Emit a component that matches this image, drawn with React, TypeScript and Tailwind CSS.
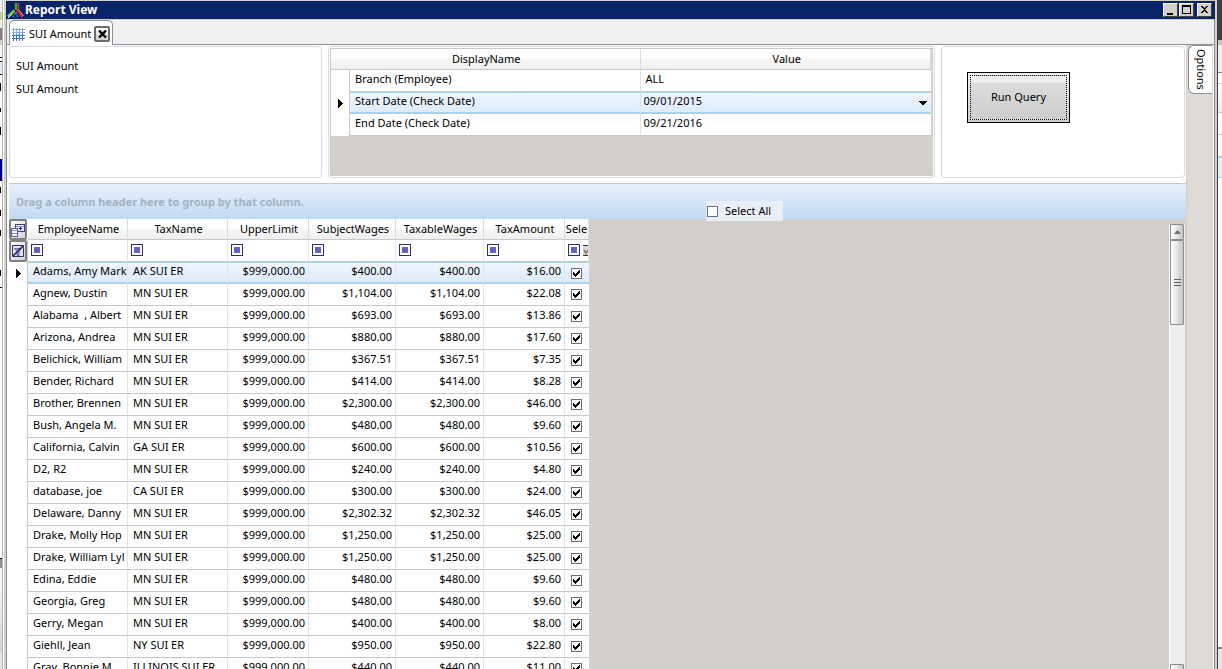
import React from "react";

type Row = [string, string, string, string, string];

const rows: Row[] = [
  ["Adams, Amy Mark", "AK SUI ER", "$400.00", "$400.00", "$16.00"],
  ["Agnew, Dustin", "MN SUI ER", "$1,104.00", "$1,104.00", "$22.08"],
  ["Alabama  , Albert", "MN SUI ER", "$693.00", "$693.00", "$13.86"],
  ["Arizona, Andrea", "MN SUI ER", "$880.00", "$880.00", "$17.60"],
  ["Belichick, William", "MN SUI ER", "$367.51", "$367.51", "$7.35"],
  ["Bender, Richard", "MN SUI ER", "$414.00", "$414.00", "$8.28"],
  ["Brother, Brennen", "MN SUI ER", "$2,300.00", "$2,300.00", "$46.00"],
  ["Bush, Angela M.", "MN SUI ER", "$480.00", "$480.00", "$9.60"],
  ["California, Calvin", "GA SUI ER", "$600.00", "$600.00", "$10.56"],
  ["D2, R2", "MN SUI ER", "$240.00", "$240.00", "$4.80"],
  ["database, joe", "CA SUI ER", "$300.00", "$300.00", "$24.00"],
  ["Delaware, Danny", "MN SUI ER", "$2,302.32", "$2,302.32", "$46.05"],
  ["Drake, Molly Hop", "MN SUI ER", "$1,250.00", "$1,250.00", "$25.00"],
  ["Drake, William Lyl", "MN SUI ER", "$1,250.00", "$1,250.00", "$25.00"],
  ["Edina, Eddie", "MN SUI ER", "$480.00", "$480.00", "$9.60"],
  ["Georgia, Greg", "MN SUI ER", "$480.00", "$480.00", "$9.60"],
  ["Gerry, Megan", "MN SUI ER", "$400.00", "$400.00", "$8.00"],
  ["Giehll, Jean", "NY SUI ER", "$950.00", "$950.00", "$22.80"],
  ["Gray, Bonnie M", "ILLINOIS SUI ER", "$440.00", "$440.00", "$11.00"],
];

const columns = ["EmployeeName", "TaxName", "UpperLimit", "SubjectWages", "TaxableWages", "TaxAmount", "Sele"];

const headCell =
  "h-[21px] overflow-hidden whitespace-nowrap border-b border-r border-b-[#c8c8c8] border-r-[#dcdcdc] bg-linear-to-b from-white from-45% via-[#f7f7f7] via-50% to-[#efefef] p-0 text-center font-normal";

function Check({ label }: { label: string }) {
  return (
    <span className="grid size-[11px]">
      <input
        type="checkbox"
        defaultChecked
        aria-label={label}
        className="peer size-[11px] appearance-none border border-[#707070] bg-white [grid-area:1/1]"
      />
      <svg viewBox="0 0 11 11" shapeRendering="crispEdges" className="pointer-events-none hidden size-[11px] [grid-area:1/1] peer-checked:block">
        <path d="M2 4h1v1h1v1h1v-1h1v-1h1v-1h1v-1h1v3h-1v1h-1v1h-1v1h-1v1h-1v-1h-1v-1h-1z" fill="#000" />
      </svg>
    </span>
  );
}

function Pointer() {
  return (
    <svg viewBox="0 0 5 9" className="ml-[7px] block h-[9px] w-[5px]" shapeRendering="crispEdges">
      <path d="M0 0h1v1h1v1h1v1h1v1h1v1h-1v1h-1v1h-1v1h-1v1h-1z" fill="#000" />
    </svg>
  );
}

function FilterButton({ name }: { name: string }) {
  return (
    <button aria-label={`Filter ${name}`} className="grid size-[12px] shrink-0 place-items-center border border-[#30306a] bg-white">
      <span className="size-[6px] bg-[#6464cc]" />
    </button>
  );
}

function CaptionButton({ label, children }: { label: string; children: React.ReactNode }) {
  return (
    <button
      aria-label={label}
      className="h-[14px] w-[15px] border border-b-[#404040] border-l-white border-r-[#404040] border-t-white bg-[#d4d0c8]"
    >
      <svg viewBox="0 0 13 12" className="block h-[12px] w-[13px]" shapeRendering="crispEdges">
        {children}
      </svg>
    </button>
  );
}

function TitleBar() {
  return (
    <header className="flex h-[18px] shrink-0 items-center bg-[#0a246a] pl-px pr-[3px] text-white">
      <svg viewBox="0 0 17 16" className="h-[16px] w-[17px]">
        <path d="M4 1l5 8" stroke="#111" strokeWidth="1.4" />
        <path d="M1 14.500L7.500 8.500" stroke="#8cc63f" strokeWidth="2.6" />
        <path d="M1 16L5 12" stroke="#e8f5c0" strokeWidth="1" />
        <path d="M9.500 7L15.500 15" stroke="#e02020" strokeWidth="2.4" />
        <path d="M11.500 7.500L16.500 14" stroke="#f8d0d0" strokeWidth=".8" />
        <path d="M9 1v7" stroke="#3fa535" strokeWidth="2.4" />
        <path d="M11.500 1v6" stroke="#e03030" strokeWidth="1.4" />
        <path d="M6 15l3-5 2 6" stroke="#4a78c8" strokeWidth="1.4" fill="none" strokeDasharray="2 1" />
      </svg>
      <h1 className="ml-px flex-1 text-[12px] font-bold leading-[16px]">Report View</h1>
      <div className="flex">
        <CaptionButton label="Minimize">
          <path d="M3 9h6v2h-6z" fill="#000" />
        </CaptionButton>
        <span className="w-px" />
        <CaptionButton label="Maximize">
          <path d="M2 1h9v9h-9zM3 3v6h7v-6z" fill="#000" fillRule="evenodd" />
        </CaptionButton>
        <span className="w-[3px]" />
        <CaptionButton label="Close">
          <path d="M3 2h2v1h1v1h1v-1h1v-1h2v1h-1v1h-1v1h-1v1h1v1h1v1h1v1h-2v-1h-1v-1h-1v1h-1v1h-2v-1h1v-1h1v-1h1v-1h-1v-1h-1v-1h-1z" fill="#000" />
        </CaptionButton>
      </div>
    </header>
  );
}

function TabStrip() {
  return (
    <nav className="flex h-[26px] shrink-0 items-end border-b border-t border-b-[#8c8f98] border-t-[#d4d0c8] bg-[#f0f0f0] pl-[2px]">
      <div className="-mb-px flex h-[25px] items-center rounded-t-[5px] border border-b-0 border-[#8c8f98] bg-white pl-px pr-[2px] pt-[2px]">
        <svg viewBox="0 0 14 14" className="size-[14px]" shapeRendering="crispEdges">
          <path d="M2 0v14M5 0v14M8 0v14M11 0v14M0 2h14M0 5h14M0 8h14M0 11h14" transform="translate(.5 .5)" stroke="#3f78c0" strokeWidth="1" />
          <path d="M2 0v6M5 0v6M8 0v6M11 0v6M0 2h14M0 5h14" transform="translate(.5 .5)" stroke="#7fb0e4" strokeWidth="1" />
        </svg>
        <button className="ml-[4px] whitespace-nowrap leading-[16px]">SUI Amount</button>
        <button
          aria-label="Close tab"
          className="ml-[3px] grid size-[16px] place-items-center rounded-[2px] border-2 border-[#6c6c6c] bg-linear-to-b from-white to-[#cfcfcf]"
        >
          <svg viewBox="0 0 9 8" className="h-[8px] w-[9px]">
            <path d="M1 .5L8 7.5M8 .5L1 7.5" stroke="#000" strokeWidth="2.4" />
          </svg>
        </button>
      </div>
    </nav>
  );
}

function Parameters() {
  const line = "h-[22px] border-b border-b-[#c8c8c8] p-0";
  return (
    <section className="rounded-[4px] border border-[#d8dae0] bg-white p-px">
      <div className="h-full border-l border-t border-[#c8c8c8] bg-[#d3d0cb] pr-[2px]">
        <table className="w-full table-fixed border-separate border-spacing-0">
          <colgroup>
            <col className="w-[19px]" />
            <col />
            <col />
          </colgroup>
          <thead>
            <tr>
              <th colSpan={2} className={`${headCell} pl-[2px]`}>DisplayName</th>
              <th className={`${headCell} pl-[3px]`}>Value</th>
            </tr>
          </thead>
          <tbody>
            <tr>
              <td className="h-[22px] border-r border-r-[#c8c8c8] bg-white p-0" />
              <td className={`${line} border-r border-r-[#e4e4e4] bg-white pb-[4px] pl-[5px]`}>Branch (Employee)</td>
              <td className={`${line} bg-white pb-[4px] pl-[5px]`}>ALL</td>
            </tr>
            <tr>
              <td className="h-[22px] border-r border-r-[#c8c8c8] bg-white p-0">
                <Pointer />
              </td>
              <td className={`${line} border-r border-t border-r-[#e4e4e4] border-t-[#98d8fa] bg-linear-to-b from-[#f0f6fd] to-[#dcebfc] pb-[4px] pl-[5px] shadow-[inset_0_-1px_0_#98d8fa]`}>
                Start Date (Check Date)
              </td>
              <td className={`${line} border-t border-t-[#98d8fa] bg-linear-to-b from-[#f0f6fd] to-[#dcebfc] pb-[4px] pl-[3px] shadow-[inset_0_-1px_0_#98d8fa]`}>
                <div className="flex items-center pr-[4px]">
                  <select aria-label="Start Date (Check Date)" className="h-[16px] flex-1 appearance-none bg-transparent leading-[16px]">
                    <option>09/01/2015</option>
                  </select>
                  <svg viewBox="0 0 8 4" className="mt-[4px] h-[4px] w-[8px]" shapeRendering="crispEdges">
                    <path d="M0 0h8v1h-1v1h-1v1h-1v1h-2v-1h-1v-1h-1v-1h-1z" fill="#000" />
                  </svg>
                </div>
              </td>
            </tr>
            <tr>
              <td className="h-[22px] border-r border-r-[#c8c8c8] bg-white p-0" />
              <td className={`${line} border-r border-r-[#e4e4e4] bg-white pb-[4px] pl-[5px]`}>End Date (Check Date)</td>
              <td className={`${line} bg-white pb-[4px] pl-[3px]`}>09/21/2016</td>
            </tr>
          </tbody>
        </table>
      </div>
    </section>
  );
}

function DataGrid() {
  const cell =
    "h-[22px] overflow-hidden whitespace-pre border-b border-r border-b-[#c8c8c8] border-r-[#e4e4e4] p-0 pb-[4px]";
  const active = "border-t border-t-[#98d8fa] bg-linear-to-b from-[#f0f6fd] to-[#dcebfc] shadow-[inset_0_-1px_0_#98d8fa]";
  const tool = "grid w-[18px] place-items-center rounded-[2px] border-2 border-[#808080] bg-linear-to-br from-white to-[#d0d0d0]";
  return (
    <table className="w-[580px] table-fixed border-separate border-spacing-0 self-start bg-white">
      <colgroup>
        <col className="w-[19px]" />
        <col className="w-[100px]" />
        <col className="w-[100px]" />
        <col className="w-[81px]" />
        <col className="w-[87px]" />
        <col className="w-[88px]" />
        <col className="w-[81px]" />
        <col className="w-[24px]" />
      </colgroup>
      <thead>
        <tr>
          <td className="h-[21px] p-0">
            <button aria-label="Choose columns" className={`${tool} h-[21px]`}>
              <svg viewBox="0 0 14 14" className="size-[14px]" shapeRendering="crispEdges">
                <path d="M4.500 1.500h9v7h-9z" fill="#e4e8fa" stroke="#40407c" />
                <path d="M5 3.500h8" stroke="#8c92d0" />
                <path d="M.5 5.500h6v8h-6z" fill="#f4f6ff" stroke="#5c5c98" />
                <path d="M1 7.500h5M1 10.500h5" stroke="#8c92d0" />
                <path d="M8 5.500h3M9.500 4v3" stroke="#20205a" />
              </svg>
            </button>
          </td>
          {columns.map((c, i) => (
            <th key={c} className={`${headCell} ${i < 6 ? "pl-[2px]" : ""}`}>{c}</th>
          ))}
        </tr>
        <tr>
          <td className="h-[22px] border-r border-r-[#c8c8c8] p-0">
            <button aria-label="Clear filters" className={`${tool} h-[22px]`}>
              <svg viewBox="0 0 12 12" className="size-[12px]">
                <path d="M.5.500h11v11H.5z" fill="#dfe3fa" stroke="#30306a" />
                <path d="M2.500 3.500h7L7 6.500v4H5v-4z" fill="#9aa0e0" stroke="#5050a0" strokeWidth=".8" />
                <path d="M1 11L11 1" stroke="#1c1c4c" strokeWidth="1.400" />
              </svg>
            </button>
          </td>
          {columns.map((c, i) => (
            <td key={c} className="h-[22px] overflow-hidden border-b border-r border-b-[#c8c8c8] border-r-[#e4e4e4] p-0">
              <div className="flex items-center gap-[3px] overflow-hidden pb-px pl-[3px]">
                <FilterButton name={c} />
                {i < 6 ? (
                  <input aria-label={`${c} filter value`} className="h-[12px] w-0 min-w-0 flex-1 bg-transparent" />
                ) : (
                  <svg viewBox="0 0 6 11" className="h-[11px] w-[6px] shrink-0">
                    <path d="M0 1h6v9H0z" fill="#dcdcdc" />
                    <path d="M0 .5h6M0 10.500h6" stroke="#303030" />
                    <path d="M1 5l2 3 4-5" fill="none" stroke="#808080" strokeWidth="2" />
                  </svg>
                )}
              </div>
            </td>
          ))}
        </tr>
      </thead>
      <tbody>
        {rows.map((r, i) => {
          const tone = i === 0 ? active : "";
          return (
            <tr key={r[0]}>
              <td className="h-[22px] border-r border-r-[#c8c8c8] p-0">{i === 0 && <Pointer />}</td>
              <td className={`${cell} ${tone} pl-[5px]`}>{r[0]}</td>
              <td className={`${cell} ${tone} pl-[5px]`}>{r[1]}</td>
              <td className={`${cell} ${tone} pr-[3px] text-right`}>$999,000.00</td>
              <td className={`${cell} ${tone} pr-[3px] text-right`}>{r[2]}</td>
              <td className={`${cell} ${tone} pr-[3px] text-right`}>{r[3]}</td>
              <td className={`${cell} ${tone} pr-[3px] text-right`}>{r[4]}</td>
              <td className={`h-[22px] border-b border-b-[#c8c8c8] p-0 pl-[6px] ${tone}`}>
                <Check label={`Select ${r[0]}`} />
              </td>
            </tr>
          );
        })}
      </tbody>
    </table>
  );
}

function ScrollBar() {
  const face = "grid shrink-0 place-items-center rounded-[1px] border border-[#8c8c8c] bg-linear-to-r from-white via-[#e4e4e4] to-[#c4c4c8]";
  return (
    <div className="mr-px mt-[5px] flex w-[16px] flex-col border-l border-l-white bg-[#eeeeee]">
      <button aria-label="Scroll up" className={`${face} h-[16px] w-[14px]`}>
        <svg viewBox="0 0 7 4" className="h-[4px] w-[7px]">
          <path d="M3.500 0L7 4H0z" fill="#707070" />
        </svg>
      </button>
      <div className={`${face} h-[85px] w-[14px]`}>
        <svg viewBox="0 0 7 8" className="h-[8px] w-[7px]" shapeRendering="crispEdges">
          <path d="M0 .5h7M0 3.500h7M0 6.500h7" stroke="#606060" />
        </svg>
      </div>
      <div className="flex-1" />
      <button aria-label="Scroll down" className={`${face} -mb-[11px] h-[16px] w-[14px]`}>
        <svg viewBox="0 0 7 4" className="h-[4px] w-[7px]">
          <path d="M0 0h7L3.500 4z" fill="#707070" />
        </svg>
      </button>
    </div>
  );
}

function LeftEdge() {
  return (
    <div className="flex w-[2px] shrink-0 flex-col bg-white">
      <div className="h-[12px] bg-[#f0f0f0]" />
      <div className="h-[8px] bg-[#b8d890]" />
      <div className="h-[8px] bg-[#f0f0f0]" />
      <div className="h-[12px] bg-[#808080]" />
      <div className="h-[5px] bg-[#d4d0c8]" />
      <div className="h-[12px] bg-[#eef4fc]" />
      <div className="h-px bg-black" />
      <div className="mt-[3px] h-px bg-black" />
      <div className="h-[12px] bg-[#dcebfc]" />
      <div className="h-px bg-black" />
      <div className="mt-[8px] h-[8px] w-px bg-black" />
      <div className="mt-[17px] h-[4px] w-px bg-black" />
      <div className="mt-[15px] h-[8px] w-px bg-black" />
      <div className="mt-[24px] h-[22px] bg-[#00007c]" />
      <div className="mt-[6px] h-[6px] w-px bg-black" />
      <div className="mt-[17px] h-[6px] w-px bg-black" />
      <div className="mt-[14px] h-[6px] w-px bg-black" />
      <div className="mt-[34px] h-[6px] w-px bg-black" />
      <div className="mt-[11px] h-px bg-black" />
      <div className="mt-[270px] h-px bg-black" />
      <div className="h-[9px] bg-[#909090]" />
      <div className="h-[28px] bg-[#eef4fc]" />
      <div className="h-[56px] bg-linear-to-b from-[#f0f0f0] to-[#d4d0c8]" />
      <div className="flex-1 bg-[#e4e2de]" />
    </div>
  );
}

function RightEdge() {
  return (
    <div className="flex w-[4px] shrink-0 flex-col bg-white">
      <div className="h-[40px] bg-[#404040]" />
      <div className="h-[5px] bg-[#c8c6c2]" />
      <div className="h-[28px] border-b border-b-[#808080] bg-[#f0f0f0]" />
      <div className="h-[11px] border-b border-b-[#d0d0d0]" />
      <div className="h-[29px] border-b border-b-[#c8c8c8] bg-linear-to-b from-white to-[#efefef]" />
      <div className="h-[22px] border-b border-b-[#c8c8c8]" />
      <div className="h-[22px] border-b border-b-[#c8c8c8]" />
      <div className="h-[21px] border-y border-[#98d8fa] bg-[#e4f0fc]" />
      <div className="flex-1" />
      <div className="h-[22px] border-t-2 border-t-[#808080] bg-[#e8e8e8]" />
    </div>
  );
}

export default function App() {
  return (
    <div className="flex h-screen overflow-hidden bg-white font-['Noto_Sans','Liberation_Sans',sans-serif] text-[11px] leading-[14px] text-black">
      <LeftEdge />
      <div className="flex min-w-0 flex-1 border-l border-r border-l-[#b8b8b8] border-r-[#404040]">
        <div className="w-[3px] shrink-0 border-l border-l-white bg-[#d4d0c8]" />
        <div className="flex min-w-0 flex-1 flex-col border-t border-t-[#d4d0c8]">
          <TitleBar />
          <div className="flex min-h-0 flex-1 flex-col border-l border-r border-[#8c8f98]">
            <TabStrip />
            <div className="flex min-h-0 flex-1 border-r border-r-white">
              <main className="flex min-w-0 flex-1 flex-col border-r border-r-[#d4d0c8] pl-[2px]">
                <div className="mb-[5px] mt-px grid h-[132px] shrink-0 grid-cols-[313fr_607fr_244fr] gap-[6px] pr-px">
                  <section className="rounded-[4px] border border-[#d8dae0] pl-[6px] pt-[7px] leading-[23px]">
                    <p>SUI Amount</p>
                    <p>SUI Amount</p>
                  </section>
                  <Parameters />
                  <section className="rounded-[4px] border border-[#d8dae0] pl-[25px] pt-[25px]">
                    <button className="h-[51px] w-[103px] border border-black bg-linear-to-b from-[#f4f4f4] to-[#cdcdcd] p-[2px]">
                      <span className="flex h-full items-center justify-center border border-dotted border-black bg-linear-to-b from-[#eeeeee] from-15% via-[#dcdcdc] via-16% to-[#cdcdcd] pb-[2px]">
                        Run Query
                      </span>
                    </button>
                  </section>
                </div>
                <div className="relative flex h-[36px] shrink-0 items-center border-t border-t-[#c8c8c8] bg-linear-to-b from-[#e8f1fb] to-[#c0d9f2] pl-[7px] pt-px">
                  <p className="font-bold text-[#a4b2c2]">Drag a column header here to group by that column.</p>
                  <label className="absolute left-[697px] top-[17px] z-10 flex h-[20px] w-[77px] items-center gap-[7px] bg-[#eaeef7] pl-px">
                    <input type="checkbox" className="size-[11px] appearance-none border border-[#707070] bg-white" />
                    Select All
                  </label>
                </div>
                <div className="flex min-h-0 flex-1 justify-between overflow-hidden bg-[#d3d0cb]">
                  <DataGrid />
                  <ScrollBar />
                </div>
              </main>
              <aside className="w-[26px] shrink-0 bg-[#dedbd7] pl-px">
                <button className="flex h-[49px] w-[24px] items-center justify-center rounded-l-[6px] border border-r-0 border-[#8c8f98] bg-white [writing-mode:vertical-rl]">
                  Options
                </button>
              </aside>
            </div>
          </div>
        </div>
        <div className="w-[2px] shrink-0 bg-[#d4d0c8]" />
      </div>
      <RightEdge />
    </div>
  );
}
